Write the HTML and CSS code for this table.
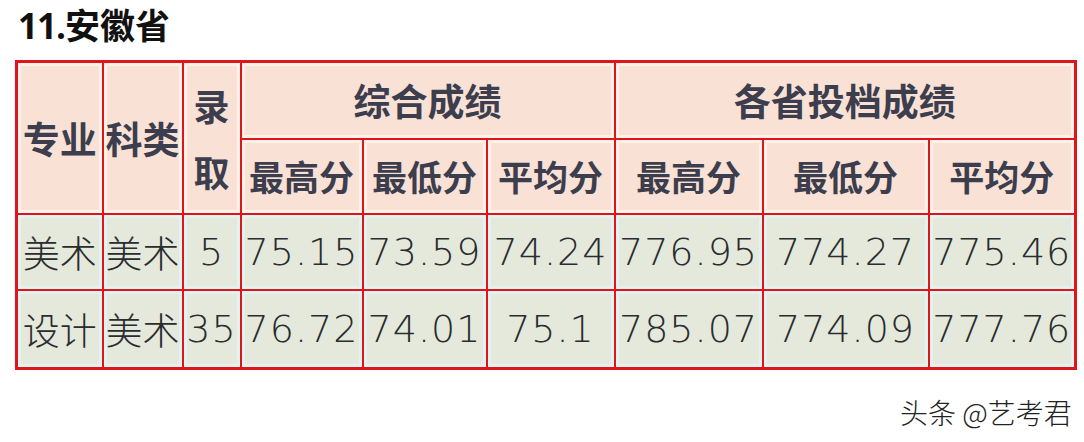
FILE: index.html
```html
<!DOCTYPE html>
<html lang="zh">
<head>
<meta charset="utf-8">
<link rel="stylesheet" href="styles.css">
</head>
<body>
<h1 class="title"><span class="num">11.</span>安徽省</h1>
<table class="grid">
  <colgroup>
    <col class="c1"><col class="c2"><col class="c3"><col class="c4"><col class="c5"><col class="c6"><col class="c7"><col class="c8"><col class="c9">
  </colgroup>
  <tr class="h1">
    <th rowspan="2" class="big">专业</th>
    <th rowspan="2" class="big">科类</th>
    <th rowspan="2" class="stack">录<br>取</th>
    <th colspan="3" class="big">综合成绩</th>
    <th colspan="3" class="big">各省投档成绩</th>
  </tr>
  <tr class="h2">
    <th>最高分</th><th>最低分</th><th>平均分</th>
    <th>最高分</th><th>最低分</th><th>平均分</th>
  </tr>
  <tr class="r1">
    <td class="cn">美术</td><td class="cn">美术</td><td>5</td>
    <td>75.15</td><td>73.59</td><td>74.24</td>
    <td>776.95</td><td>774.27</td><td>775.46</td>
  </tr>
  <tr class="r2">
    <td class="cn">设计</td><td class="cn">美术</td><td>35</td>
    <td>76.72</td><td>74.01</td><td>75.1</td>
    <td>785.07</td><td>774.09</td><td>777.76</td>
  </tr>
</table>
<div class="mark">头条 @艺考君</div>
</body>
</html>
```
FILE: styles.css
```css
html, body {
  margin: 0;
  padding: 0;
  background: #ffffff;
}
body {
  width: 1084px;
  height: 442px;
  overflow: hidden;
  font-family: "Noto Sans CJK SC", "Noto Sans", sans-serif;
}
.title {
  margin: 0;
  padding: 0 0 0 18px;
  height: 54px;
  box-sizing: border-box;
  font-size: 35px;
  line-height: 48px;
  font-weight: 700;
  color: #111;
  font-family: "Noto Sans CJK SC", sans-serif;
}
.title .num {
  font-family: "Open Sans", "Noto Sans", sans-serif;
  font-weight: 700;
  letter-spacing: -1px;
}
.grid {
  margin: 6px 0 0 15px;
  border-collapse: collapse;
  table-layout: fixed;
  width: 1062px;
  border: 3px solid #e0141b;
}
.c1 { width: 86px; }
.c2 { width: 80px; }
.c3 { width: 58px; }
.c4 { width: 122px; }
.c5 { width: 124px; }
.c6 { width: 128px; }
.c7 { width: 148px; }
.c8 { width: 166px; }
.c9 { width: 147px; }
th, td {
  border: 2px solid #e0141b;
  padding: 0;
  text-align: center;
  vertical-align: middle;
  white-space: nowrap;
  overflow: hidden;
}
th {
  background: #f9e1d6;
  box-shadow: inset 0 0 0 3px #fdf1e8;
  color: #3c3e4d;
  font-size: 35px;
  font-weight: 700;
  line-height: 40px;
  font-family: "Noto Sans CJK SC", sans-serif;
}
th.big {
  font-size: 37px;
}
th.stack {
  font-size: 36px;
  line-height: 66px;
}
.h1 { height: 77px; }
.h2 { height: 75px; }
.r1 { height: 76px; }
.r2 { height: 79px; }
td {
  background: #e4e9dc;
  box-shadow: inset 0 0 0 3px #e2f3ef;
  color: #2a2c30;
  font-family: "DejaVu Sans", sans-serif;
  font-weight: 200;
  font-size: 38px;
  letter-spacing: 1px;
}
td.cn {
  font-family: "Noto Sans CJK SC", sans-serif;
  font-weight: 300;
  font-size: 37px;
  letter-spacing: 0;
}
.mark {
  margin: 27px 0 0 900px;
  font-size: 28px;
  line-height: 30px;
  font-weight: 300;
  color: #222;
  font-family: "Noto Sans CJK SC", sans-serif;
}
```
